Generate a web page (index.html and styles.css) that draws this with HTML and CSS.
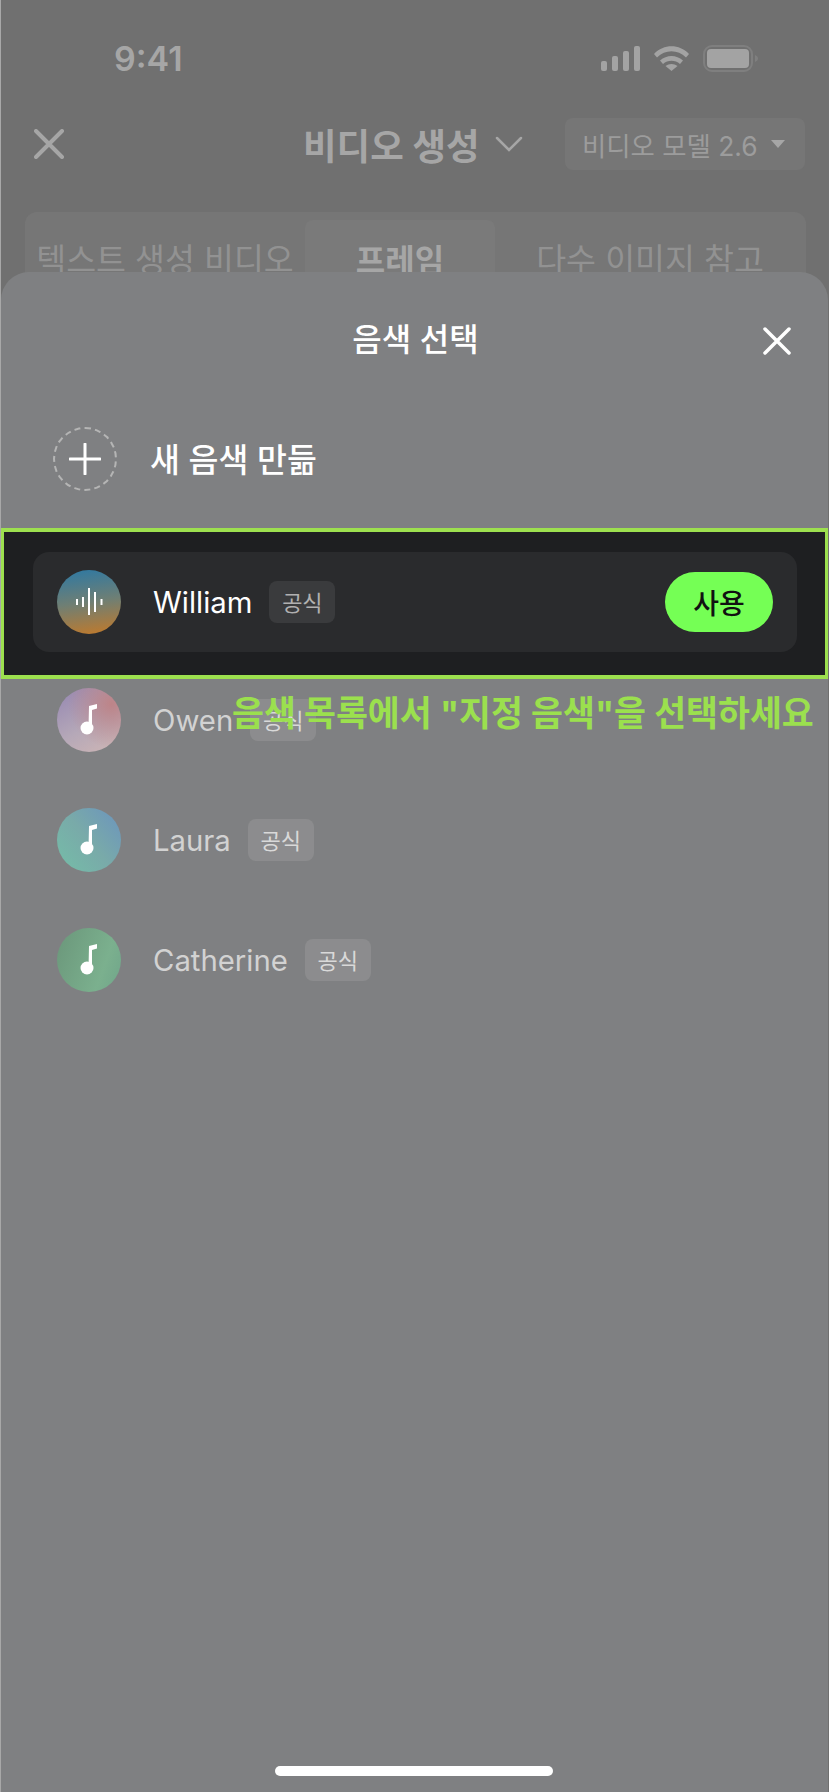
FILE: index.html
```html
<!DOCTYPE html>
<html lang="ko">
<head>
<meta charset="utf-8">
<title>음색 선택</title>
<link rel="stylesheet" href="styles.css">
</head>
<body>
<div class="screen">
  <div class="status">
    <span class="time">9:41</span>
    <div class="status-icons">
      <svg class="sig" width="39" height="25" viewBox="0 0 39 25"><rect x="0" y="15" width="6" height="10" rx="2"/><rect x="11" y="10" width="6" height="15" rx="2"/><rect x="22" y="5" width="6" height="20" rx="2"/><rect x="33" y="0" width="6" height="25" rx="2"/></svg>
      <svg class="wifi" width="35" height="25" viewBox="0 0 35 25"><path d="M0 8C9.800-2.200 25.200-2.200 35 8L32 11.500C23.800 3.300 11.200 3.300 3 11.500Z"/><path d="M6 14.500C12.800 8.500 22.200 8.500 29 14.500L26 18C21.200 13.800 13.800 13.800 9 18Z"/><path d="M11.500 20C15 17.200 20 17.200 23.500 20L17.500 25Z"/></svg>
      <svg class="batt" width="55" height="27" viewBox="0 0 55 27"><rect x="1" y="1" width="48" height="25" rx="8" fill="none" stroke="#7f7f7f" stroke-width="2"/><rect x="4" y="4" width="42" height="19" rx="4" fill="#a3a3a3"/><path d="M52 10c2 .7 3 2 3 3.500s-1 2.800-3 3.500z" fill="#7f7f7f"/></svg>
    </div>
  </div>
  <div class="nav">
    <svg class="nav-x" width="30" height="30" viewBox="0 0 30 30"><path d="M2 2L28 28M28 2L2 28"/></svg>
    <div class="nav-title"><span>비디오 생성</span><svg width="28" height="16" viewBox="0 0 28 16"><path d="M2 2L14 14L26 2"/></svg></div>
    <div class="model"><span>비디오 모델 2.6</span><i class="caret"></i></div>
  </div>
  <div class="tabs">
    <div class="tab">텍스트 생성 비디오</div>
    <div class="tab tab-on">프레임</div>
    <div class="tab">다수 이미지 참고</div>
  </div>

  <div class="sheet">
    <div class="sheet-head">
      <h2>음색 선택</h2>
      <svg class="sheet-x" width="28" height="28" viewBox="0 0 28 28"><path d="M2 2L26 26M26 2L2 26"/></svg>
    </div>
    <div class="create">
      <div class="dash"><svg width="32" height="32" viewBox="0 0 32 32"><path d="M16 1V31M1 16H31"/></svg></div>
      <span>새 음색 만듦</span>
    </div>
    <div class="pick">
      <div class="card">
        <div class="avatar av-w">
          <svg width="64" height="64" viewBox="0 0 64 64"><rect x="19" y="29" width="2" height="6"/><rect x="25" y="27" width="2" height="10"/><rect x="31" y="18" width="2" height="27"/><rect x="37" y="22" width="2" height="20"/><rect x="43.500" y="29" width="2" height="6"/></svg>
        </div>
        <span class="name name-on">William</span>
        <span class="badge badge-on">공식</span>
        <button class="use">사용</button>
      </div>
    </div>
    <div class="row">
      <div class="avatar av-o"><svg width="64" height="64" viewBox="0 0 64 64"><circle cx="30" cy="40" r="6.500"/><path d="M31.500 40L32 18L40 16V20.500L35 22L35 40Z"/></svg></div>
      <span class="name">Owen</span><span class="badge">공식</span>
    </div>
    <div class="row">
      <div class="avatar av-l"><svg width="64" height="64" viewBox="0 0 64 64"><circle cx="30" cy="40" r="6.500"/><path d="M31.500 40L32 18L40 16V20.500L35 22L35 40Z"/></svg></div>
      <span class="name">Laura</span><span class="badge">공식</span>
    </div>
    <div class="row">
      <div class="avatar av-c"><svg width="64" height="64" viewBox="0 0 64 64"><circle cx="30" cy="40" r="6.500"/><path d="M31.500 40L32 18L40 16V20.500L35 22L35 40Z"/></svg></div>
      <span class="name">Catherine</span><span class="badge">공식</span>
    </div>
    <div class="home"></div>
  </div>

  <div class="note">음색 목록에서 "지정 음색"을 선택하세요</div>
</div>
</body>
</html>
```
FILE: styles.css
```css
* { box-sizing: border-box; }
html, body { margin: 0; padding: 0; }
body {
  width: 829px;
  height: 1792px;
  overflow: hidden;
  background: #707070;
  font-family: Inter, "Noto Sans CJK KR", sans-serif;
}
.screen {
  position: relative;
  width: 829px;
  height: 1792px;
  overflow: hidden;
  background: #707070;
  border-left: 1px solid #a8a8a8;
}
.status {
  display: flex;
  align-items: center;
  justify-content: space-between;
  height: 118px;
  padding: 0 71px 2px 113px;
}
.time { font-size: 34px; font-weight: 600; color: #a6a6a6; }
.status-icons { display: flex; align-items: center; gap: 14px; }
.status-icons svg { fill: #a3a3a3; display: block; }
.nav { display: flex; align-items: center; height: 52px; padding: 0 24px 0 33px; }
.nav-x path { fill: none; stroke: #a6a6a6; stroke-width: 4; stroke-linecap: round; }
.nav-title {
  display: flex;
  align-items: center;
  gap: 15px;
  margin-left: 239px;
  font-size: 36.500px;
  font-weight: 700;
  color: #a6a6a6;
}
.nav-title svg path { fill: none; stroke: #a6a6a6; stroke-width: 2.500; stroke-linecap: round; }
.model {
  display: flex;
  align-items: center;
  gap: 13px;
  width: 240px;
  height: 52px;
  margin-left: auto;
  padding-left: 17px;
  border-radius: 8px;
  background: #767676;
  font-size: 26.400px;
  color: #9c9c9c;
  white-space: nowrap;
}
.caret { width: 0; height: 0; border: 7px solid transparent; border-top: 8px solid #a6a6a6; border-bottom: 0; }
.tabs {
  display: flex;
  margin: 42px 23px 0 24px;
  height: 100px;
  padding-top: 8px;
  border-radius: 12px;
  background: #767676;
}
.tab { text-align: center; font-size: 32.500px; line-height: 82px; color: #929292; white-space: nowrap; }
.tab:nth-child(1) { width: 280px; }
.tab:nth-child(3) { width: 310px; }
.tab-on { width: 190px; background: #7a7a7a; border-radius: 8px 8px 0 0; font-size: 32px; font-weight: 700; color: #a6a6a6; }
.sheet {
  position: absolute;
  left: 0;
  top: 272px;
  right: 1px;
  bottom: 0;
  border-radius: 28px 28px 0 0;
  background: #7f8082;
}
.sheet-head { position: relative; height: 110px; display: flex; align-items: center; justify-content: center; padding: 20px 0 0 2px; }
.sheet-head h2 { margin: 0; font-size: 32px; font-weight: 500; color: #fff; }
.sheet-x { position: absolute; top: 55px; right: 37px; }
.sheet-x path { fill: none; stroke: #fff; stroke-width: 3.500; stroke-linecap: round; }
.create { display: flex; align-items: center; gap: 33px; margin-top: 45px; padding-left: 52px; }
.create span { position: relative; top: -2px; font-size: 32.500px; font-weight: 500; color: #fff; }
.dash {
  display: flex;
  align-items: center;
  justify-content: center;
  width: 64px;
  height: 64px;
  border: 2px dashed #b5b5b5;
  border-radius: 50%;
}
.dash svg path { fill: none; stroke: #fff; stroke-width: 3; stroke-linecap: round; }
.pick {
  height: 151px;
  margin-top: 37px;
  padding: 20px 28px 0 29px;
  border: solid #9de04f;
  border-width: 4px 3px;
  background: #1e1f21;
}
.card {
  display: flex;
  align-items: center;
  height: 100px;
  padding: 0 24px;
  border-radius: 16px;
  background: #2a2b2d;
}
.row { display: flex; align-items: center; height: 64px; margin-top: 56px; padding-left: 56px; }
.pick + .row { margin-top: 9px; }
.avatar { flex: none; width: 64px; height: 64px; border-radius: 50%; }
.avatar svg { display: block; fill: #fff; }
.av-w { background: linear-gradient(172deg, #33799f 5%, #6f7f74 50%, #bb7a30 95%); }
.av-o { background: radial-gradient(circle at 85% 25%, #bd8488 0, transparent 60%), linear-gradient(150deg, #9a8cb3 10%, #b5a8b8 55%, #cdb5b5 95%); }
.av-l { background: linear-gradient(50deg, #76b8a8 15%, #79aaa9 50%, #6e98ba 90%); }
.av-c { background: linear-gradient(110deg, #6d9a7d 10%, #7bb08e 70%, #70a58a 100%); }
.name { margin-left: 32px; font-size: 29.300px; color: #d2d2d2; }
.name-on { color: #fff; }
.badge {
  display: flex;
  align-items: center;
  justify-content: center;
  width: 66px;
  height: 42px;
  margin-left: 17px;
  padding-bottom: 3px;
  border-radius: 8px;
  background: #8c8c8e;
  font-size: 22px;
  color: #d9d9d9;
}
.badge-on { background: #3a3b3d; color: #b0b0b0; }
.use {
  width: 108px;
  height: 60px;
  margin-left: auto;
  padding: 0;
  border: 0;
  border-radius: 30px;
  background: #75ff55;
  font-family: inherit;
  font-size: 28px;
  font-weight: 500;
  color: #111;
}
.home {
  position: absolute;
  left: 274px;
  top: 1494px;
  width: 278px;
  height: 10px;
  border-radius: 5px;
  background: #fff;
}
.note {
  position: absolute;
  left: 231px;
  top: 689px;
  font-size: 34.700px;
  font-weight: 700;
  line-height: 48px;
  color: #9be04e;
  white-space: nowrap;
}
```
